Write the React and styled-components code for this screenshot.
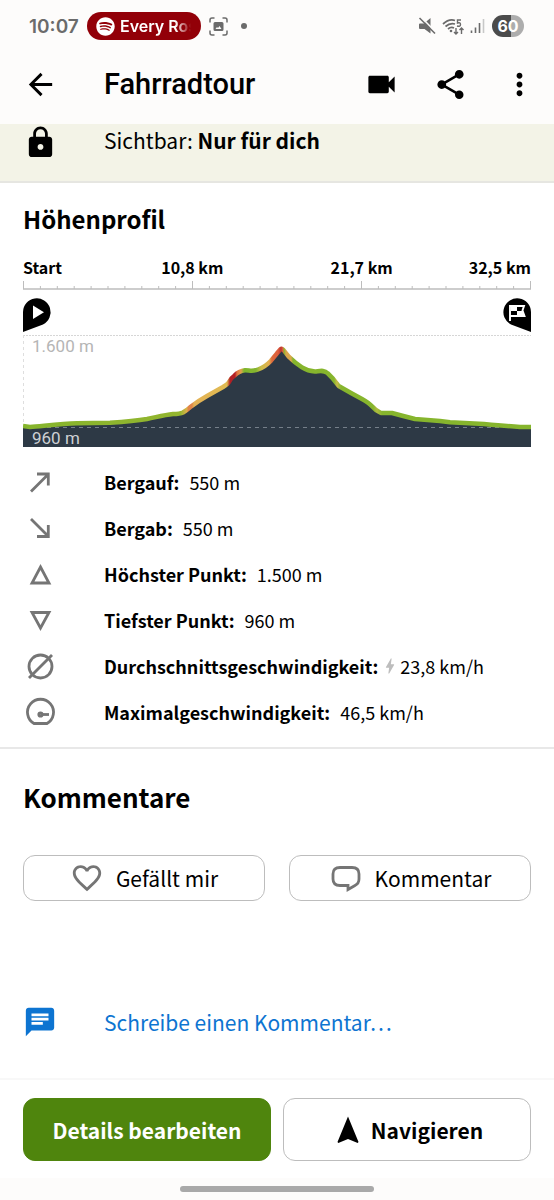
import React from "react";
import styled, { createGlobalStyle } from "styled-components";
import { FaSpotify } from "react-icons/fa";
import {
    MdArrowBack,
    MdBolt,
    MdChat,
    MdFavoriteBorder,
    MdLock,
    MdMoreVert,
    MdShare,
    MdVideocam,
} from "react-icons/md";

const stats = [
    { icon: "up", label: "Bergauf:", value: "550 m" },
    { icon: "down", label: "Bergab:", value: "550 m" },
    { icon: "highest", label: "Höchster Punkt:", value: "1.500 m" },
    { icon: "lowest", label: "Tiefster Punkt:", value: "960 m" },
    { icon: "average", label: "Durchschnittsgeschwindigkeit:", value: "23,8 km/h", bolt: true },
    { icon: "max", label: "Maximalgeschwindigkeit:", value: "46,5 km/h" },
];

const statShapes = {
    up: <path d="M8 26.500L24.500 10M14 9H25.300V20.500" />,
    down: <path d="M8 8L24.500 24.500M14 25.500H25.300V14" />,
    highest: <path d="M17.500 10L26 26H9Z" />,
    lowest: <path d="M9 9.500H26L17.500 25Z" />,
    average: (
        <>
            <circle cx="17.500" cy="17.500" r="11.500" />
            <path d="M6 29L29 6" />
        </>
    ),
    max: (
        <>
            <path d="M11 28.500H24A13 13 0 1 0 11 28.500Z" />
            <path d="M17.500 19.500H26" />
            <circle cx="17.500" cy="19.500" r="1.700" />
        </>
    ),
};

const gradeStops = [
    [0, "#86b52d"], [157, "#93b52f"], [164, "#e0b04a"], [165, "#e08448"], [169, "#e08448"],
    [171, "#e3b155"], [204, "#dfbb52"], [207, "#b32024"], [212, "#b32024"], [214, "#e0713f"],
    [218, "#e3a24d"], [221, "#7fb52d"], [233, "#84b52e"], [238, "#c9bb48"], [246, "#e3b04f"],
    [249, "#dd6a3c"], [255, "#de5f3d"], [258, "#bf3230"], [260, "#dd6a3c"], [261, "#86b52d"],
    [263, "#d9a74b"], [268, "#d9a74b"], [270, "#86b52d"], [311, "#86b52d"], [314, "#c9bb48"],
    [318, "#86b52d"], [350, "#86b52d"], [354, "#b0bb40"], [359, "#86b52d"], [508, "#86b52d"],
];

const profile =
    "M0 91L7 92C20 91 38 89 54 88.300L87 87.700C98 87 112 86 124 84C134 82 141 80 150 79Q157 79 160 77.500Q164 75 167 72.300Q175 66 184 61L200 52Q205 49 206 47Q208 43 211 41Q216 36 222 35.300C226 35 229 37 235 34.500Q242 32 248 25.700L254 18.300L257.500 14.300Q259 13 260.500 15L265.700 21.700Q272 28 279 32.300Q285 36 292 36.500C297 36 301 34.500 304.700 38.300Q310 43 315.700 51L328 58L339 64Q346 68 349 71.300Q353 76 358 78H369Q380 81 392 84L417 86L427 87.300L461 89Q484 91 497 92H508";

const ticks = Array.from({ length: 31 }, (_, i) => i);

const StatIcon = ({ name }) => (
    <Glyph width="35" height="35" viewBox="0 0 35 35" aria-hidden="true">
        {statShapes[name]}
    </Glyph>
);

const StatusBar = () => (
    <Status>
        <Clock>10:07</Clock>
        <Music>
            <FaSpotify size={19} />
            <Song>Every Ros</Song>
        </Music>
        <svg width="19" height="19" viewBox="0 0 19 19" fill="none" stroke="#6b6b6b" strokeWidth="1.500" aria-hidden="true">
            <path d="M1 5.500V3Q1 1 3 1H5.500M13.500 1H16Q18 1 18 3V5.500M18 13.500V16Q18 18 16 18H13.500M5.500 18H3Q1 18 1 16V13.500" />
            <path fill="#6b6b6b" stroke="none" fillRule="evenodd" d="M6 5H13Q14.500 5 14.500 6.500V12.500Q14.500 14 13 14H6Q4.500 14 4.500 12.500V6.500Q4.500 5 6 5ZM6.500 12H12.500L10.500 9L9 11L8 10Z" />
        </svg>
        <Dot />
        <Signals>
            <svg width="18" height="18" viewBox="0 0 18 18" aria-hidden="true">
                <path fill="#6b6b6b" d="M2 6.500H6L12.500 1V16.500L6.500 12H2Q1 12 1 11V7.500Q1 6.500 2 6.500Z" />
                <path stroke="#fdfcfb" strokeWidth="1.600" d="M3 0L18 15.500" />
                <path stroke="#6b6b6b" strokeWidth="1.600" d="M1.500 1L17 16.500" />
            </svg>
            <svg width="22" height="19" viewBox="0 0 22 19" fill="none" stroke="#6b6b6b" strokeWidth="1.700" aria-hidden="true">
                <path d="M1 7Q7 1.500 13 3.500M3.500 9.500Q8 5.500 13 7M6 12Q9 9.500 12 11" />
                <circle cx="9" cy="14" r="1.300" fill="#6b6b6b" stroke="none" />
                <path strokeWidth="1.400" d="M19 3H15.500V6Q18.500 5 18.500 7.500Q18.500 10 15 9M14 11V17M12 15L14 17L16 15M19.500 17V11M17.500 13L19.500 11L21.500 13" />
            </svg>
            <svg width="15" height="16" viewBox="0 0 15 16" strokeWidth="1.600" aria-hidden="true">
                <path stroke="#6b6b6b" d="M1.500 12.500V15M5.500 9.500V15M9.500 5V15" />
                <path stroke="#c8c8c8" d="M13.500 1V15" />
            </svg>
        </Signals>
        <Battery>60</Battery>
    </Status>
);

const ElevationChart = () => (
    <>
        <Distances>
            <span>Start</span>
            <span>10,8 km</span>
            <span>21,7 km</span>
            <span>32,5 km</span>
        </Distances>
        <Chart viewBox="0 0 508 170" role="img" aria-label="Höhenprofil der Tour">
            <defs>
                <linearGradient id="grade" gradientUnits="userSpaceOnUse" x1="0" y1="0" x2="508" y2="0">
                    {gradeStops.map(([x, color]) => (
                        <stop key={x} offset={x / 508} stopColor={color} />
                    ))}
                </linearGradient>
            </defs>
            <g stroke="#bdbdbd">
                <path d="M0 12H508" strokeWidth="1.500" />
                {ticks.map((i) => {
                    const x = 0.5 + i * 16.9;
                    return <path key={i} d={`M${x} 12V${i % 10 === 0 ? 4 : 9}`} />;
                })}
            </g>
            <g transform="translate(0 21)">
                <path d="M0 34V14A13.800 13.800 0 1 1 20 26.500Z" />
                <path d="M10 7.500L21 14.300L10 21Z" fill="#fff" />
            </g>
            <g transform="translate(480 21)">
                <path d="M28 34V14A13.800 13.800 0 1 0 8 26.500Z" />
                <path d="M7 23V8H21L19.500 12.500L21.500 18H7" fill="none" stroke="#fff" strokeWidth="1.900" />
                <path d="M8 8.500H14V13H8ZM14 13H19.500L21 17.500H14Z" fill="#fff" />
            </g>
            <g transform="translate(0 58)">
                <path d="M0 .5H508" stroke="#d6d6d6" strokeDasharray="2 1" />
                <path d="M.5 0V90" stroke="#dedede" strokeDasharray="3 3" />
                <path d={`${profile}V112H0Z`} fill="#2d3945" />
                <path d="M0 92.500H508" stroke="#87919a" strokeDasharray="4 4" opacity=".8" />
                <path d={profile} fill="none" stroke="url(#grade)" strokeWidth="4.500" strokeLinejoin="round" />
                <ChartLabel x="9" y="17" fill="#b5b5b5">1.600 m</ChartLabel>
                <ChartLabel x="9" y="109" fill="#cdd0d3">960 m</ChartLabel>
            </g>
        </Chart>
    </>
);

const App = () => {
    return (
        <Page>
            <GlobalStyle />
            <StatusBar />
            <Header>
                <IconButton aria-label="Zurück"><MdArrowBack size={35} /></IconButton>
                <Title>Fahrradtour</Title>
                <Actions>
                    <IconButton aria-label="Video"><MdVideocam size={35} /></IconButton>
                    <IconButton aria-label="Teilen"><MdShare size={35} /></IconButton>
                    <IconButton aria-label="Mehr"><MdMoreVert size={35} /></IconButton>
                </Actions>
            </Header>
            <Visibility>
                <MdLock size={35} />
                <p>Sichtbar: <b>Nur für dich</b></p>
            </Visibility>
            <Profile>
                <Heading>Höhenprofil</Heading>
                <ElevationChart />
                <Stats>
                    {stats.map((stat) => (
                        <Stat key={stat.icon}>
                            <StatIcon name={stat.icon} />
                            <StatText>
                                <dt>{stat.label}</dt>
                                <StatValue $bolt={stat.bolt}>
                                    {stat.bolt && <MdBolt size={20} color="#bdbdbd" />}
                                    {stat.value}
                                </StatValue>
                            </StatText>
                        </Stat>
                    ))}
                </Stats>
            </Profile>
            <Comments>
                <Heading $large>Kommentare</Heading>
                <Reactions>
                    <Reaction>
                        <MdFavoriteBorder size={34} color="#757575" />
                        Gefällt mir
                    </Reaction>
                    <Reaction>
                        <svg width="34" height="34" viewBox="0 0 34 34" fill="none" stroke="#757575" strokeWidth="2.800" aria-hidden="true">
                            <path d="M11 6.500H23Q30 6.500 30 13V18Q30 22.500 26 24.500L19 28.500V24.500H11Q4 24.500 4 18V13Q4 6.500 11 6.500Z" />
                        </svg>
                        Kommentar
                    </Reaction>
                </Reactions>
                <WriteComment href="#kommentar">
                    <MdChat size={34} />
                    Schreibe einen Kommentar…
                </WriteComment>
            </Comments>
            <Footer>
                <FooterButton $primary>Details bearbeiten</FooterButton>
                <FooterButton>
                    <svg width="28" height="28" viewBox="-6 0 28 28" aria-hidden="true">
                        <path d="M11 .5L21.500 26L20.700 27L11 23L1.300 27L.5 26Z" />
                    </svg>
                    Navigieren
                </FooterButton>
            </Footer>
            <GestureBar><Handle /></GestureBar>
        </Page>
    );
};

export default App;

const GlobalStyle = createGlobalStyle`
* {
    box-sizing: border-box;
}
body {
    margin: 0;
    background: #fff;
    color: #000;
    font-family: "Noto Sans CJK SC", "Noto Sans", sans-serif;
}
h1, h2, p, dl, dd {
    margin: 0;
}
button {
    padding: 0;
    border: none;
    background: none;
    color: inherit;
    font-family: inherit;
    cursor: pointer;
}
svg {
    display: block;
    flex-shrink: 0;
}
`;

const Page = styled.div`
    display: flex;
    flex-direction: column;
    min-height: 100vh;
`;

const Status = styled.div`
    display: flex;
    align-items: center;
    height: 52px;
    padding: 0 30px 0 29px;
    background: #fdfcfb;
    color: #6b6b6b;
    font-family: Inter, sans-serif;
`;

const Clock = styled.span`
    width: 58px;
    font-size: 19px;
    font-weight: 600;
`;

const Music = styled.div`
    display: flex;
    align-items: center;
    gap: 5px;
    width: 114px;
    height: 28px;
    margin-right: 8px;
    padding: 0 2px 0 9px;
    border-radius: 14px;
    background: #920008;
    color: #fff;
`;

const Song = styled.span`
    flex: 1;
    font-size: 16px;
    font-weight: 600;
    white-space: nowrap;
    mask-image: linear-gradient(90deg, #000 70%, transparent 90%);
`;

const Dot = styled.span`
    width: 6px;
    height: 6px;
    margin-left: 13px;
    border-radius: 50%;
    background: #6b6b6b;
`;

const Signals = styled.div`
    display: flex;
    align-items: center;
    gap: 6px;
    margin-left: auto;
`;

const Battery = styled.span`
    width: 32px;
    margin-left: 7px;
    border-radius: 11px;
    background: linear-gradient(90deg, #4b4b4b 60%, #adadad 60%);
    color: #fff;
    font-size: 16px;
    font-weight: 700;
    line-height: 22px;
    text-align: center;
`;

const Header = styled.header`
    display: flex;
    align-items: center;
    height: 72px;
    padding: 0 17px 8px 23px;
    background: #fdfcfb;
`;

const IconButton = styled.button`
    display: flex;
`;

const Title = styled.h1`
    margin-left: 46px;
    font-family: Roboto, sans-serif;
    font-size: 29px;
    font-weight: 500;
    line-height: 36px;
`;

const Actions = styled.div`
    display: flex;
    gap: 34px;
    margin-left: auto;
`;

const Visibility = styled.div`
    display: flex;
    gap: 46px;
    padding: 1px 23px 21px;
    border-bottom: 2px solid #e6e6e1;
    background: #f3f3e7;
    font-size: 21px;
    line-height: 30px;
`;

const Profile = styled.section`
    padding: 18px 23px 12px;
    border-bottom: 2px solid #e8e8e8;
`;

const Heading = styled.h2`
    font-size: ${({ $large }) => ($large ? "26px" : "24px")};
    font-weight: 700;
    line-height: 36px;
`;

const Distances = styled.div`
    display: grid;
    grid-template-columns: 1fr 2fr 2fr 1fr;
    margin-top: 20px;
    font-size: 16px;
    font-weight: 700;
    line-height: 20px;
    text-align: center;
    white-space: nowrap;

    span:first-child {
        text-align: left;
    }
    span:last-child {
        justify-self: end;
    }
`;

const Chart = styled.svg`
    width: 100%;
    height: auto;
`;

const ChartLabel = styled.text`
    font-family: Roboto, sans-serif;
    font-size: 17px;
`;

const Stats = styled.dl`
    margin-top: 12px;
`;

const Stat = styled.div`
    display: flex;
    align-items: center;
    gap: 46px;
    height: 46px;
`;

const Glyph = styled.svg`
    fill: none;
    stroke: #757575;
    stroke-width: 2.800;
`;

const StatText = styled.div`
    display: flex;
    font-size: 18px;
    line-height: 28px;
    white-space: nowrap;

    dt {
        font-weight: 700;
    }
`;

const StatValue = styled.dd`
    display: flex;
    align-items: center;
    padding-left: ${({ $bolt }) => ($bolt ? "2px" : "10px")};
`;

const Comments = styled.section`
    flex: 1;
    padding: 30px 23px;
`;

const Reactions = styled.div`
    display: grid;
    grid-template-columns: 1fr 1fr;
    gap: 24px;
    margin-top: 40px;
`;

const Reaction = styled.button`
    display: flex;
    align-items: center;
    justify-content: center;
    gap: 12px;
    height: 46px;
    border: 1px solid #bdbdbd;
    border-radius: 12px;
    font-size: 21px;
`;

const WriteComment = styled.a`
    display: flex;
    align-items: center;
    gap: 47px;
    margin-top: 104px;
    color: #0d74d1;
    font-size: 21px;
    line-height: 34px;
    text-decoration: none;
`;

const Footer = styled.footer`
    display: grid;
    grid-template-columns: 1fr 1fr;
    gap: 12px;
    padding: 18px 23px 17px;
    border-top: 2px solid #f8f8f8;
`;

const FooterButton = styled.button`
    display: flex;
    align-items: center;
    justify-content: center;
    gap: 12px;
    height: 63px;
    border: 1px solid ${({ $primary }) => ($primary ? "#4f850d" : "#bdbdbd")};
    border-radius: 12px;
    background: ${({ $primary }) => ($primary ? "#4f850d" : "#fff")};
    color: ${({ $primary }) => ($primary ? "#fff" : "#000")};
    font-size: 21px;
    font-weight: 700;
`;

const GestureBar = styled.div`
    display: flex;
    justify-content: center;
    padding: 8px 0;
    background: #fdfcfb;
`;

const Handle = styled.span`
    width: 35%;
    height: 6px;
    border-radius: 3px;
    background: #a9a9a9;
`;
